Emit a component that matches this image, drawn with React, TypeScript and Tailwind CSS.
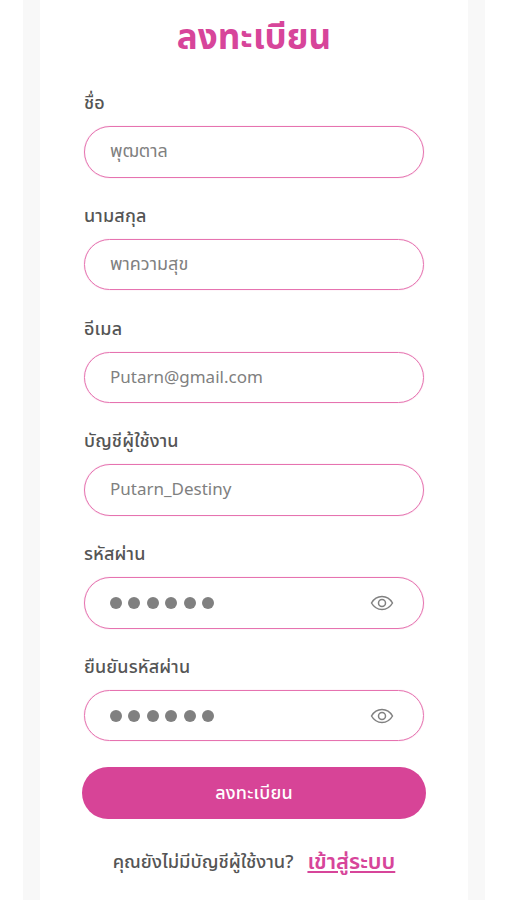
const fontStack = { fontFamily: '"Noto Sans", "Noto Sans Thai", Inter, "Liberation Sans", sans-serif' };

function EyeIcon() {
  return (
    <svg width="24" height="18" viewBox="0 0 24 18" fill="none" stroke="#808080" strokeWidth="1.5">
      <path d="M1.5 9C4 4.6 7.6 2.5 12 2.5S20 4.6 22.5 9C20 13.4 16.4 15.500 12 15.500S4 13.400 1.500 9Z" />
      <circle cx="12" cy="9" r="3.500" />
    </svg>
  );
}

function Field({ label, value, thai }: { label: string; value: string; thai?: boolean }) {
  return (
    <div className="flex flex-col">
      <label className="h-[24px] text-[18px] font-medium leading-[24px] tracking-[0.15px] text-[#555]">{label}</label>
      <div
        className={
          thai
            ? "mt-[12px] flex h-[51.5px] w-[340px] items-center rounded-full border border-[#e673b0] pb-[2px] pl-[25px] text-[18px] text-[#808080] shadow-[0_0_1px_#eea0cb]"
            : "mt-[12px] flex h-[51.5px] w-[340px] items-center rounded-full border border-[#e673b0] pb-[2px] pl-[25px] text-[17px] text-[#808080] shadow-[0_0_1px_#eea0cb]"
        }
      >
        {value}
      </div>
    </div>
  );
}

function PasswordField({ label }: { label: string }) {
  return (
    <div className="flex flex-col">
      <label className="h-[24px] text-[18px] font-medium leading-[24px] tracking-[0.15px] text-[#555]">{label}</label>
      <div className="mt-[12px] flex h-[51.5px] w-[340px] items-center justify-between rounded-full border border-[#e673b0] pl-[25px] pr-[29px] shadow-[0_0_1px_#eea0cb]">
        <div className="flex gap-[6.4px]">
          {[0, 1, 2, 3, 4, 5].map((i) => (
            <span key={i} className="h-[12px] w-[12px] rounded-full bg-[#808080]" />
          ))}
        </div>
        <EyeIcon />
      </div>
    </div>
  );
}

export default function App() {
  return (
    <div className="h-[900px] w-[507px] overflow-hidden bg-white" style={fontStack}>
      <div className="mx-[23px] h-full w-[462px] bg-[#f8f8f8] px-[17px]">
        <div className="flex h-full w-[428px] flex-col items-center bg-white">
          <h1 className="mt-[14px] h-[44px] text-[35px] font-bold leading-[44px] text-[#d7459a]">ลงทะเบียน</h1>
          <div className="mt-[32px] flex flex-col gap-[25.3px]">
            <Field label="ชื่อ" value="พุฒตาล" thai />
            <Field label="นามสกุล" value="พาความสุข" thai />
            <Field label="อีเมล" value="Putarn@gmail.com" />
            <Field label="บัญชีผู้ใช้งาน" value="Putarn_Destiny" />
            <PasswordField label="รหัสผ่าน" />
            <PasswordField label="ยืนยันรหัสผ่าน" />
          </div>
          <button className="mt-[26px] h-[52px] w-[344px] rounded-full bg-[#d74497] pb-[2px] text-[18px] font-medium tracking-[0.2px] text-white">ลงทะเบียน</button>
          <div className="mt-[25px] flex items-center gap-[14px]">
            <span className="text-[18.3px] font-medium text-[#555]">คุณยังไม่มีบัญชีผู้ใช้งาน?</span>
            <a className="text-[22px] font-semibold text-[#d7459a] underline">เข้าสู่ระบบ</a>
          </div>
        </div>
      </div>
    </div>
  );
}
